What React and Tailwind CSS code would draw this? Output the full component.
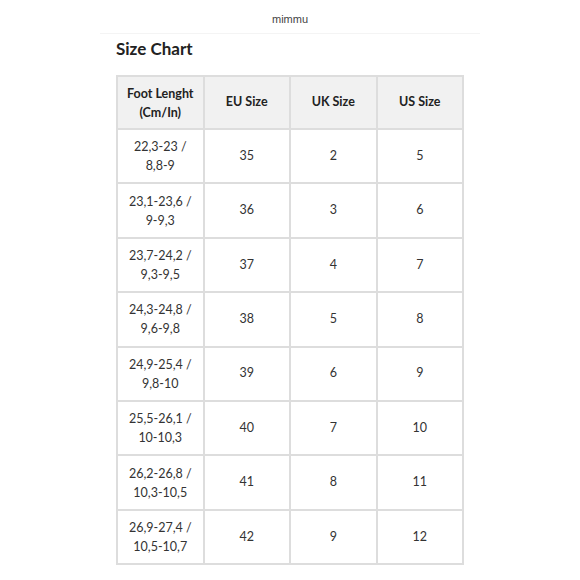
const rows = [
  ['22,3-23 /', '8,8-9', '35', '2', '5'],
  ['23,1-23,6 /', '9-9,3', '36', '3', '6'],
  ['23,7-24,2 /', '9,3-9,5', '37', '4', '7'],
  ['24,3-24,8 /', '9,6-9,8', '38', '5', '8'],
  ['24,9-25,4 /', '9,8-10', '39', '6', '9'],
  ['25,5-26,1 /', '10-10,3', '40', '7', '10'],
  ['26,2-26,8 /', '10,3-10,5', '41', '8', '11'],
  ['26,9-27,4 /', '10,5-10,7', '42', '9', '12'],
]

export default function App() {
  return (
    <div className="w-[580px] h-[580px] bg-white font-['Lato','Noto_Sans',sans-serif] text-[#333]">
      {/* Store bar */}
      <div className="mx-[100px] h-[34px] pt-[12px] text-center border-b border-[#f4f4f4] text-[11px] leading-[14px] text-[#444] font-['Liberation_Sans',sans-serif]">
        mimmu
      </div>

      <div className="px-[116px]">
        <h1 className="mt-[4px] text-[17px] font-bold text-[#222] leading-[22px]">Size Chart</h1>

        <table className="mt-[15px] w-[348px] border-collapse table-fixed text-[12.5px] text-center">
          <thead>
            <tr className="h-[53px] bg-[#f1f1f1]">
              <th className="border-2 border-[#dddddd] font-bold leading-[19px] text-[#222]">
                Foot Lenght<br />(Cm/In)
              </th>
              <th className="border-2 border-[#dddddd] font-bold text-[#222]">EU Size</th>
              <th className="border-2 border-[#dddddd] font-bold text-[#222]">UK Size</th>
              <th className="border-2 border-[#dddddd] font-bold text-[#222]">US Size</th>
            </tr>
          </thead>
          <tbody>
            {rows.map((r) => (
              <tr key={r[2]} className="h-[54.4px]">
                <td className="border-2 border-[#dddddd] leading-[19px]">
                  {r[0]}<br />{r[1]}
                </td>
                <td className="border-2 border-[#dddddd]">{r[2]}</td>
                <td className="border-2 border-[#dddddd]">{r[3]}</td>
                <td className="border-2 border-[#dddddd]">{r[4]}</td>
              </tr>
            ))}
          </tbody>
        </table>
      </div>
    </div>
  )
}
